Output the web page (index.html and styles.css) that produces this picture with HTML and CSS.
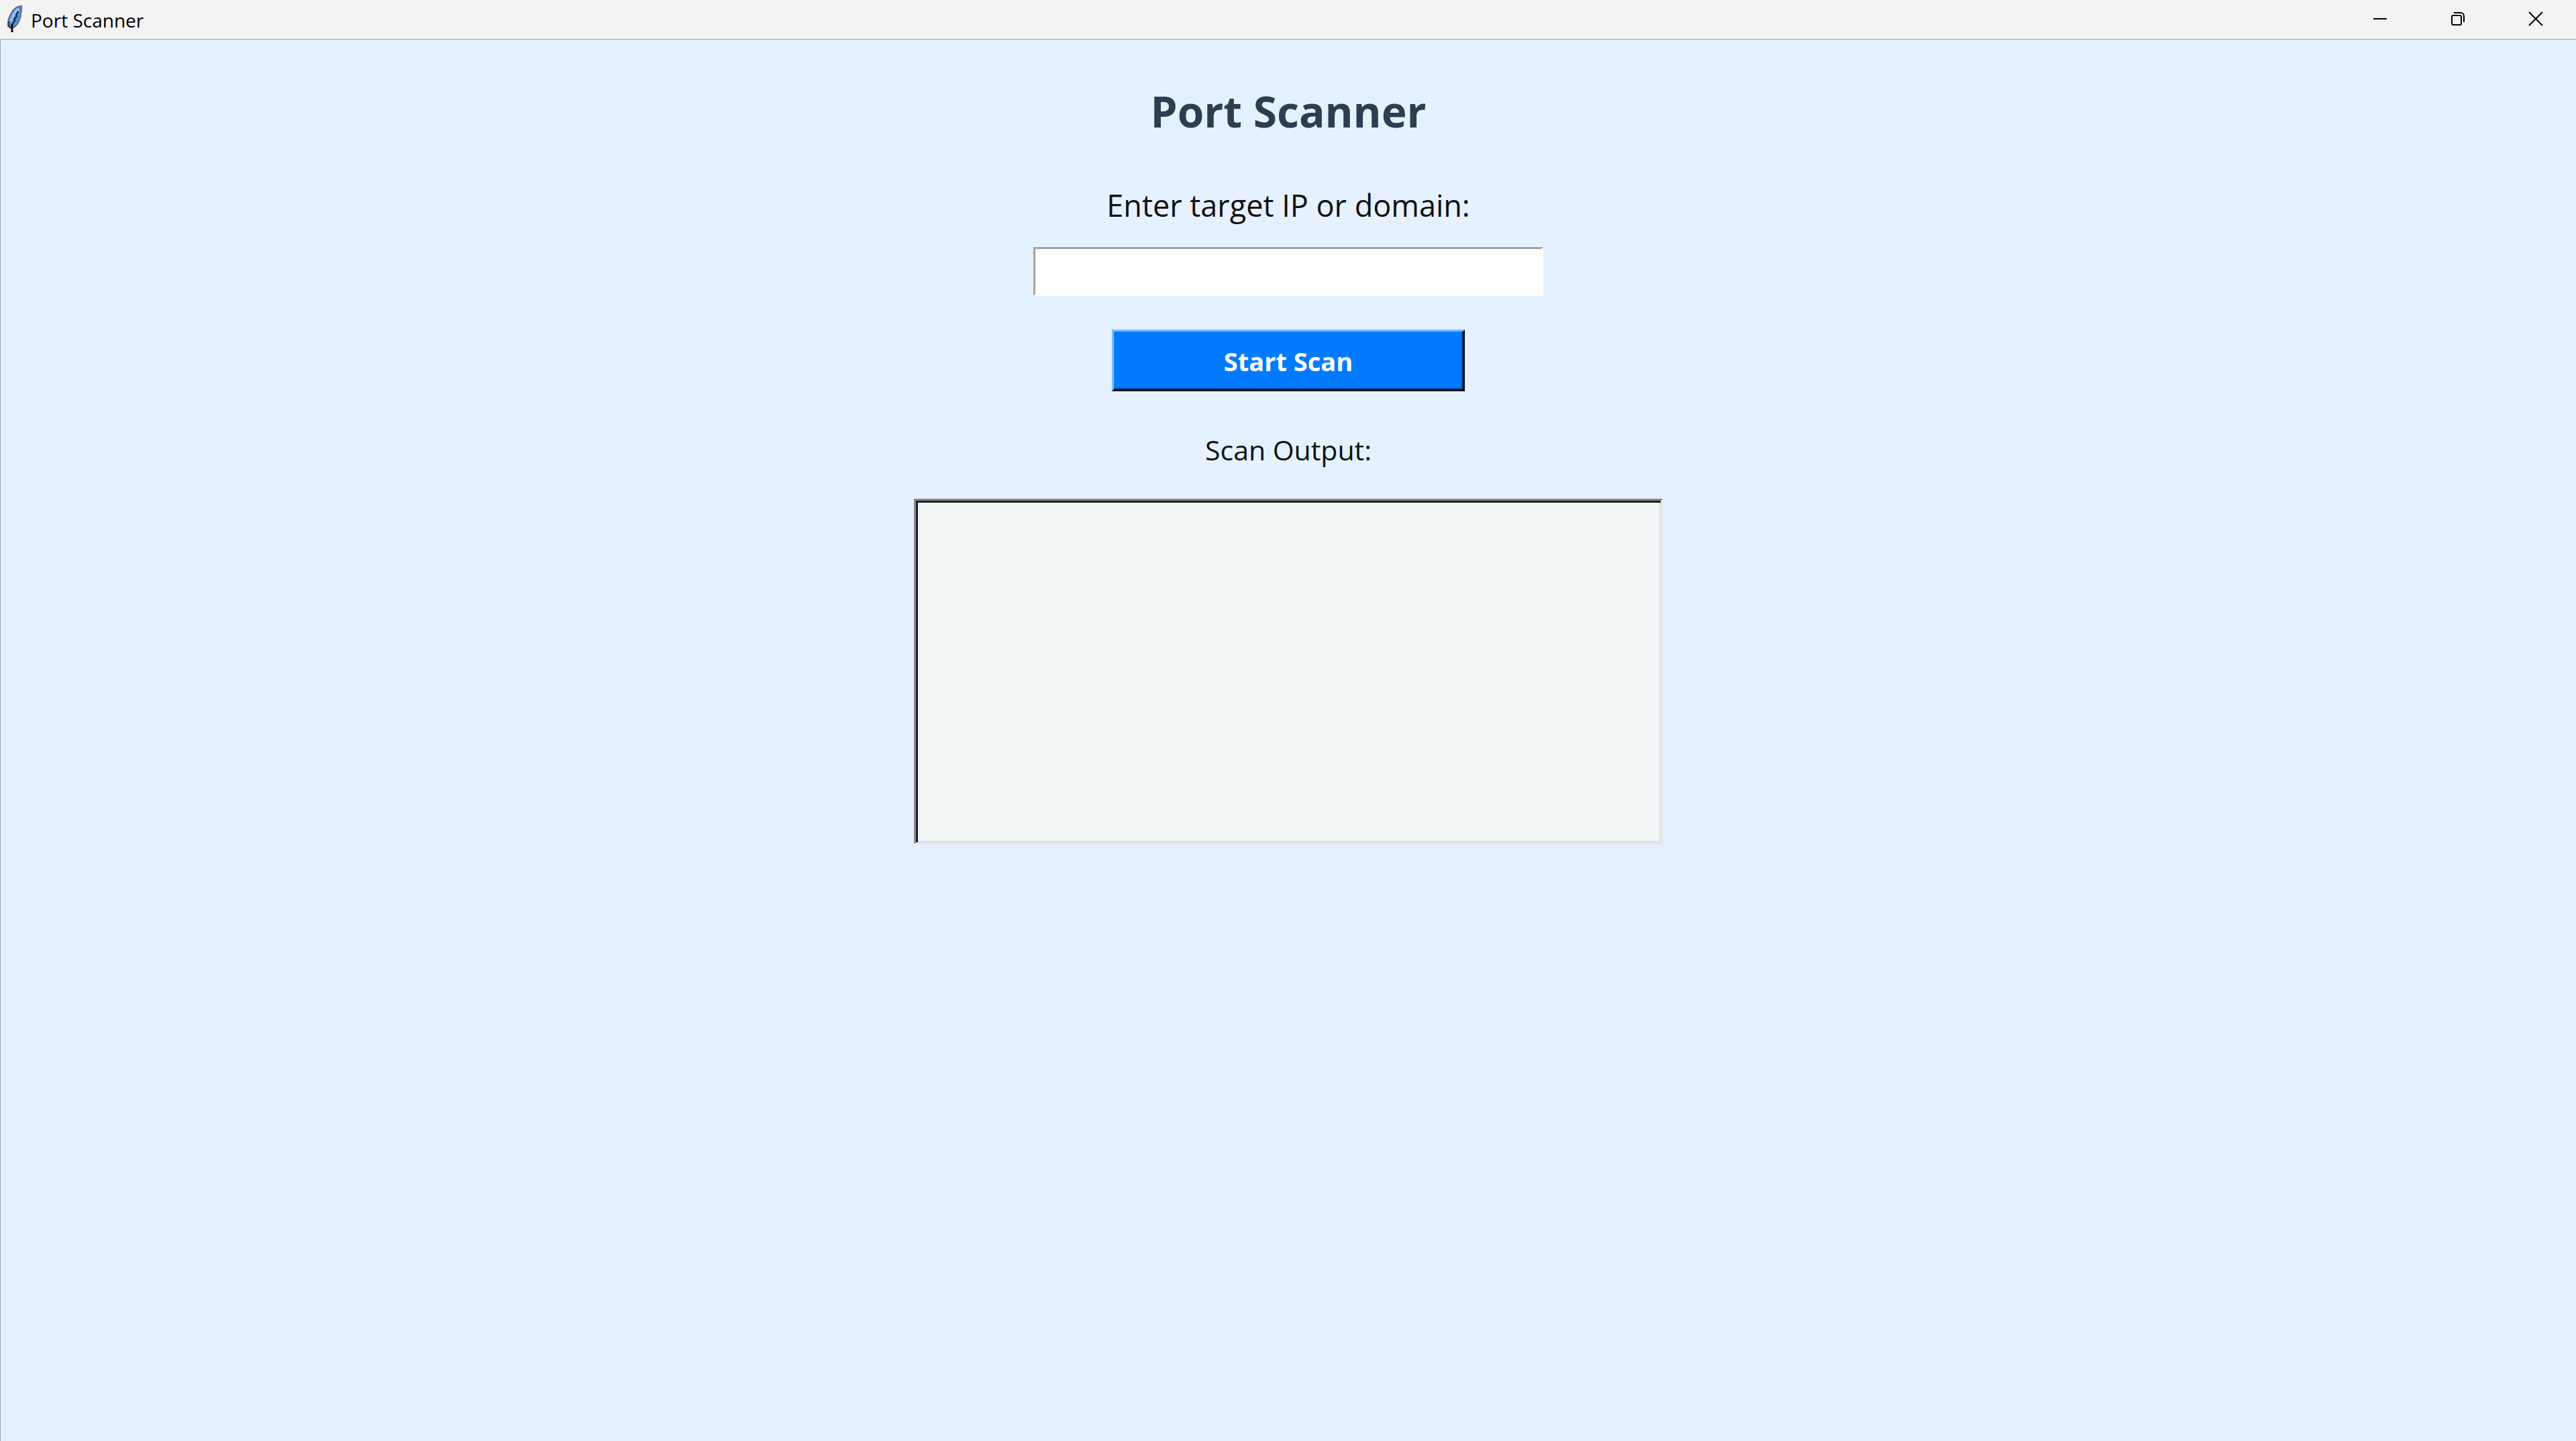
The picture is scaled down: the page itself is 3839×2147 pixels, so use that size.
FILE: index.html
```html
<!DOCTYPE html>
<html lang="en">
<head>
<meta charset="utf-8">
<meta name="viewport" content="width=device-width, initial-scale=1">
<title>Port Scanner</title>
<link rel="stylesheet" href="styles.css">
</head>
<body>
<header class="titlebar">
  <svg class="app-icon" viewBox="0 0 24 42" aria-hidden="true">
    <path d="M22 1C15 1 9 6 6 13 3 19 1 24 2 31l4 3 6-2c5-4 9-12 9-19 0-4 2-8 1-12z" fill="#4f8fd8" stroke="#6a6e74" stroke-width="2"/>
    <path d="M18 5c-6 4-9 10-12 19" fill="none" stroke="#8fc0f2" stroke-width="4"/>
    <path d="M17 9l-3 5 1 2-4 5 1 2-4 6" fill="none" stroke="#111820" stroke-width="2"/>
    <path d="M8 28v12" fill="none" stroke="#0b0b0b" stroke-width="3"/>
    <path d="M3 24v7l4 3" fill="none" stroke="#33373c" stroke-width="2"/>
  </svg>
  <span class="app-name">Port Scanner</span>
  <div class="window-controls">
    <button class="control" type="button" aria-label="Minimize">
      <svg class="glyph" viewBox="0 0 20 20"><path d="M0 10H20"/></svg>
    </button>
    <button class="control" type="button" aria-label="Restore">
      <svg class="glyph" viewBox="0 0 20 20"><rect x="1" y="5" width="14" height="14" rx="2"/><path d="M4 1h10a5 5 0 0 1 5 5v9"/></svg>
    </button>
    <button class="control" type="button" aria-label="Close">
      <svg class="glyph" viewBox="0 0 20 20"><path d="M0 0L20 20M20 0L0 20"/></svg>
    </button>
  </div>
</header>
<main class="scanner">
  <h1 class="heading">Port Scanner</h1>
  <label class="target-label" for="target">Enter target IP or domain:</label>
  <input class="target" id="target" type="text">
  <button class="start" type="button">Start Scan</button>
  <label class="output-label" for="output">Scan Output:</label>
  <textarea class="output" id="output" readonly></textarea>
</main>
</body>
</html>
```
FILE: styles.css
```css
* {
  box-sizing: border-box;
}

body {
  display: flex;
  flex-direction: column;
  min-height: 100vh;
  margin: 0;
  background: #e5f1ff;
  color: #111;
  font-family: "Open Sans", "Noto Sans", sans-serif;
}

.titlebar {
  display: flex;
  align-items: center;
  height: 59px;
  padding: 0 2px 0 10px;
  border-bottom: 1px solid #9aa6b4;
  background: #f3f3f3;
}

.app-icon {
  width: 24px;
  height: 42px;
}

.app-name {
  margin-left: 12px;
  padding-top: 2px;
  color: #000;
  font-size: 28px;
  line-height: 40px;
}

.window-controls {
  display: flex;
  align-self: stretch;
  margin-left: auto;
}

.control {
  display: flex;
  align-items: center;
  justify-content: center;
  width: 116px;
  padding: 0 0 2px;
  border: 0;
  background: transparent;
}

.glyph {
  width: 20px;
  height: 20px;
  overflow: visible;
  fill: none;
  stroke: #000;
  stroke-width: 2;
}

.scanner {
  display: flex;
  flex: 1;
  flex-direction: column;
  align-items: center;
  padding: 67px 16px 48px;
  border-left: 1px solid #9aa6b4;
}

.heading {
  margin: 0;
  color: #2c3e50;
  font-size: 64px;
  font-weight: 700;
  line-height: 80px;
}

.target-label {
  margin-top: 70px;
  font-size: 45px;
  line-height: 60px;
}

.target {
  width: 760px;
  max-width: 100%;
  height: 73px;
  margin-top: 32px;
  padding: 0 8px;
  border: 3px solid;
  border-color: #a5a5a5 #fff #fff #a5a5a5;
  background: #fff;
  font: inherit;
  font-size: 40px;
}

.start {
  width: 526px;
  max-width: 100%;
  height: 92px;
  margin-top: 50px;
  padding: 2px 0 0;
  border: 3px solid;
  border-color: #7dbbff #050a10 #050a10 #7dbbff;
  background: #007bff;
  box-shadow: inset -2px -2px #004c9e;
  color: #fff;
  font: inherit;
  font-size: 38px;
  font-weight: 700;
}

.output-label {
  margin-top: 59px;
  font-size: 41px;
  line-height: 56px;
}

.output {
  width: 1116px;
  max-width: 100%;
  height: 515px;
  margin-top: 45px;
  padding: 8px;
  border: 3px solid;
  border-color: #858a8e #e2e8ea #e2e8ea #858a8e;
  background: #f0f6f6;
  box-shadow: inset 3px 3px #1e2020, inset -2px -2px #dce3e3;
  font: inherit;
  font-size: 36px;
  resize: none;
}
```
